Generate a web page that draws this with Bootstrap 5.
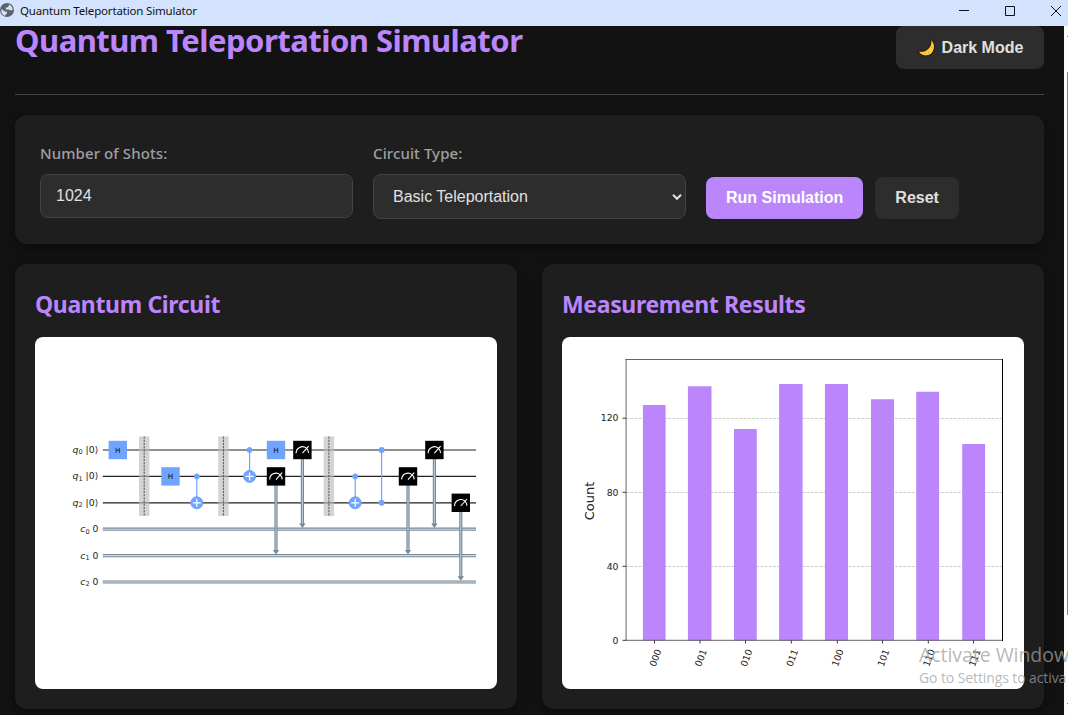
<!DOCTYPE html>
<html lang="en" data-bs-theme="dark">
<head>
<meta charset="utf-8">
<meta name="viewport" content="width=device-width, initial-scale=1">
<title>Quantum Teleportation Simulator</title>
<link href="https://cdn.jsdelivr.net/npm/bootstrap@5.3.0/dist/css/bootstrap.min.css" rel="stylesheet">
<style>
:root { --accent: #bb86fc; --surface: #1e1e1e; --field: #2d2d2d; --line: #444; }
body { background: #121212; color: #e0e0e0; height: 100vh; font-family: "Noto Sans", "Open Sans", sans-serif; }
.titlebar { height: 26px; background: #d3e3fd; color: #111; flex: none; }
.titlebar-text { font-size: 11.5px; line-height: 22px; padding-left: 6px; letter-spacing: -.17px; }
.win-controls { height: 22px; }
.viewport { min-height: 0; }
.page-body { padding: 0 20px 0 15px; min-width: 0; }
.page-header { height: 69px; border-bottom: 1px solid var(--line); margin-bottom: 20px; }
h1, h2 { color: var(--accent); font-weight: 700; margin: 0; white-space: nowrap; }
h1 { font-size: 31px; line-height: 28px; letter-spacing: -.52px; }
h2 { font-size: 23px; line-height: 32px; margin: 4px 0 17px; letter-spacing: -.35px; }
.app-btn { --bs-btn-bg: #2d2d2d; --bs-btn-color: #e0e0e0; --bs-btn-border-width: 0; --bs-btn-border-radius: 8px;
  --bs-btn-font-weight: 700; --bs-btn-font-size: 16px; font-family: "Liberation Sans", sans-serif; height: 42px; padding: 0 20px; line-height: 18px; white-space: nowrap; }
.app-btn-run { --bs-btn-bg: var(--accent); --bs-btn-color: #fff; }
.theme-btn { height: 43px; width: 148px; padding: 0; border-radius: 8px; }
.moon-icon { margin-right: 5px; }
.panel { background: var(--surface); border-radius: 12px; box-shadow: 0 4px 12px rgba(0,0,0,.4); }
.controls { height: 129px; padding: 25px; margin-bottom: 20px; gap: 20px; }
.field-box { width: 313px; }
.field-box label { display: block; font-size: 15px; line-height: 26px; margin-bottom: 8px; color: #a0a0a0; font-weight: 500; letter-spacing: .1px; }
.field-box .form-control, .field-box .form-select { background-color: var(--field); border: 1px solid var(--line); border-radius: 8px; color: #e0e0e0;
  font: 16px/18px "Liberation Sans", sans-serif; height: 44px; padding: 0 15px; }
.field-box .form-select { height: 45px; padding: 0 19px; background-position: right 3px center; background-size: 10px 8px;
  background-image: url("data:image/svg+xml,%3csvg xmlns='http://www.w3.org/2000/svg' viewBox='0 0 10 8'%3e%3cpath fill='none' stroke='%23e0e0e0' stroke-width='2' d='M1 1.8 5 5.8 9 1.8'/%3e%3c/svg%3e"); }
.results { gap: 25px; }
.result-panel { flex: 1 1 0; height: 445px; padding: 20px; }
.figure-box { height: 352px; background: #fff; border-radius: 8px; overflow: hidden; }
.figure-box svg { display: block; width: 100%; height: 100%; font-family: "DejaVu Sans", sans-serif; }
.scroll-track { width: 4px; background: #fcfcfc; padding-left: 3px; flex: none; }
.scroll-arrow { height: 1px; margin-top: 10px; background: #888; }
.scroll-thumb { height: 543px; margin-top: 35px; background: #888; }
.scroll-arrow-end { height: 1px; margin-top: 88px; background: #888; }
.activation { position: absolute; left: 919px; right: 0; top: 642px; overflow: hidden; white-space: nowrap; color: rgba(160,160,160,.75); pointer-events: none; font-family: "Open Sans", sans-serif; }
.activation-title { font-size: 19.5px; line-height: 26px; letter-spacing: -.05px; }
.activation-note { font-size: 14px; line-height: 20px; letter-spacing: -.1px; }
</style>
</head>
<body class="d-flex flex-column overflow-hidden position-relative">
<div class="titlebar d-flex justify-content-between align-items-start">
  <div class="d-flex">
    <svg width="14" height="22" viewBox="0 0 14 22"><circle cx="7" cy="10" r="7" fill="#5f6368"/><path d="M1.2 9.5Q3 9.5 4 10.8T7 11.6Q7.6 13 6 14.4T5.2 16Q1 14.5 1.2 9.5M8.8 4.6Q12.5 6 12.7 10L10.5 10.6Q9.6 9.4 8 9.4H5.8V7.6H7.4Q7.6 6.3 8.8 6.2Z" fill="#d3e3fd"/></svg>
    <span class="titlebar-text">Quantum Teleportation Simulator</span>
  </div>
  <svg class="win-controls" width="118" height="22" viewBox="950 0 118 22" fill="none" stroke="#111"><path d="M959 10.5h10M1005.500 6.500h9v9h-9z"/><path d="M1051 6l10 10M1061 6l-10 10"/></svg>
</div>
<div class="viewport d-flex flex-grow-1">
<main class="page-body flex-grow-1">
  <header class="page-header d-flex justify-content-between align-items-start">
    <h1>Quantum Teleportation Simulator</h1>
    <button class="btn app-btn theme-btn d-flex align-items-center justify-content-center" type="button">
      <svg class="moon-icon" width="20" height="20" viewBox="0 0 20 20"><path d="M13.800 1.200Q18.600 5.400 17.200 11.200Q15.200 17.800 8.600 18Q3 17.600 1.200 12.800Q7 14.400 10.600 11.100Q14.700 7.400 13.800 1.200Z" fill="#ffc83d" stroke="#15120a" stroke-width="1"/><path d="M14.500 9.500l.6.600M11 14.500l.6.500M7.500 15.600l.6.200" stroke="#d67d00"/></svg>
      <span>Dark Mode</span>
    </button>
  </header>
  <section class="panel controls d-flex align-items-start">
    <div class="field-box"><label for="shots">Number of Shots:</label><input id="shots" class="form-control" type="text" value="1024"></div>
    <div class="field-box"><label for="ctype">Circuit Type:</label><select id="ctype" class="form-select"><option>Basic Teleportation</option></select></div>
    <div class="d-flex align-self-end" style="gap:12px">
      <button class="btn app-btn app-btn-run" type="button">Run Simulation</button>
      <button class="btn app-btn" type="button">Reset</button>
    </div>
  </section>
  <section class="results d-flex">
    <article class="panel result-panel">
      <h2>Quantum Circuit</h2>
      <div class="figure-box">
        <svg viewBox="35 337 462 352">
          <defs>
            <g id="hgate"><rect x="-9.200" y="-9.200" width="18.400" height="18.400" fill="#6fa4ff"/><text y="2.700" font-size="7.300" text-anchor="middle" fill="#111">H</text></g>
            <g id="meter"><rect x="-9.200" y="-9.200" width="18.400" height="18.400" fill="#000"/><path d="M-6.300 3.200A6.300 6.300 0 0 1 4 -1.800M0 3.200L6.200-3.800M4.200-1.600Q5.900 0 6.200 3" fill="none" stroke="#fff" stroke-width="1.100"/></g>
            <g id="cnot" stroke="#6fa4ff"><path d="M0-26.400V0" stroke-width="1.200"/><circle cy="-26.400" r="2.500" fill="#6fa4ff"/><circle r="6" fill="#6fa4ff"/><path d="M-4 0H4M0-4V4" stroke="#fff" stroke-width="1.200"/></g>
            <g id="barrier"><rect x="-5.200" y="-13.500" width="10.400" height="79.500" fill="#bdbdbd" opacity=".65"/><path d="M0-13.500V66" stroke="#333" stroke-width=".8" stroke-dasharray="2.200 1"/></g>
          </defs>
          <path d="M102.800 450H476M102.800 476.400H476M102.800 502.800H476" stroke="#222" stroke-width="1.200"/>
          <g fill="none"><path d="M102.800 529.200H476M102.800 555.600H476M102.800 582H476" stroke="#778899" stroke-width="3.200"/><path d="M102.800 529.200H476M102.800 555.600H476M102.800 582H476" stroke="#d2dfea" stroke-width="1.100"/></g>
          <g fill="none"><path d="M276 485V550M302.400 459V524M408 485V550M434.400 459V524M460.800 511V577" stroke="#778899" stroke-width="3.200"/><path d="M276 485V550M302.400 459V524M408 485V550M434.400 459V524M460.800 511V577" stroke="#c3ced8" stroke-width="1"/></g>
          <path d="M272.800 550h6.400l-3.200 4.500zM299.200 523.500h6.400l-3.200 4.500zM404.800 550h6.400l-3.200 4.500zM431.200 523.500h6.400l-3.200 4.500zM457.600 576.300h6.400l-3.200 4.500z" fill="#778899"/>
          <use href="#barrier" x="144.200" y="450"/><use href="#barrier" x="223.400" y="450"/><use href="#barrier" x="328.900" y="450"/>
          <use href="#hgate" x="117.800" y="450"/><use href="#hgate" x="170.500" y="476.400"/><use href="#hgate" x="276" y="450"/>
          <use href="#cnot" x="196.800" y="502.800"/><use href="#cnot" x="249.600" y="476.400"/><use href="#cnot" x="355.200" y="502.800"/>
          <path d="M381.600 450V502.800" stroke="#6fa4ff" stroke-width="1.200"/><g fill="#6fa4ff"><circle cx="381.600" cy="450" r="3"/><circle cx="381.600" cy="502.800" r="3"/></g>
          <use href="#meter" x="302.400" y="450"/><use href="#meter" x="276" y="476.400"/><use href="#meter" x="408" y="476.400"/><use href="#meter" x="434.400" y="450"/><use href="#meter" x="460.800" y="502.800"/>
          <g font-size="9.300" fill="#222">
            <text x="72.500" y="453"><tspan font-style="italic">q</tspan><tspan font-size="6.500" dy="1.400">0</tspan><tspan x="85.600" dy="-1.400">|0⟩</tspan></text>
            <text x="72.500" y="479.400"><tspan font-style="italic">q</tspan><tspan font-size="6.500" dy="1.400">1</tspan><tspan x="85.600" dy="-1.400">|0⟩</tspan></text>
            <text x="72.500" y="505.800"><tspan font-style="italic">q</tspan><tspan font-size="6.500" dy="1.400">2</tspan><tspan x="85.600" dy="-1.400">|0⟩</tspan></text>
            <text x="80.300" y="532.200"><tspan font-style="italic">c</tspan><tspan font-size="6.500" dy="1.400">0</tspan><tspan x="92.500" dy="-1.400">0</tspan></text>
            <text x="80.300" y="558.600"><tspan font-style="italic">c</tspan><tspan font-size="6.500" dy="1.400">1</tspan><tspan x="92.500" dy="-1.400">0</tspan></text>
            <text x="80.300" y="585"><tspan font-style="italic">c</tspan><tspan font-size="6.500" dy="1.400">2</tspan><tspan x="92.500" dy="-1.400">0</tspan></text>
          </g>
        </svg>
      </div>
    </article>
    <article class="panel result-panel">
      <h2>Measurement Results</h2>
      <div class="figure-box">
        <svg viewBox="562 337 462 352">
          <path d="M626 566.500H1002M626 492.500H1002M626 418.500H1002" stroke="#c8c8c8" stroke-width=".9" stroke-dasharray="3 1.200"/>
          <path fill="#bb86fc" d="M642.900 640.500V404.900h22.700v235.600zM687.900 640.500V386.200h23.600v254.300zM734 640.500V429h22.800v211.500zM779.100 640.500V384.100h23.500v256.400zM824.900 640.500V384.100h23.100v256.400zM871 640.500V399.200h23v241.300zM916.200 640.500V391.800h22.900v248.700zM962.200 640.500V444h22.900v196.500z"/>
          <path d="M626.100 359V640.500M625.500 359.500H1003M625.500 640.300H1003" fill="none" stroke="#555" stroke-width=".9"/>
          <path d="M1002.500 359V641" stroke="#000"/>
          <path d="M622.500 418.200h3.500M622.500 492.300h3.500M622.500 566.300h3.500M622.500 640.300h3.500M654.500 640.500v3M700 640.500v3M745.500 640.500v3M791.300 640.500v3M837.300 640.500v3M882.500 640.500v3M928.300 640.500v3M973.500 640.500v3" stroke="#222" stroke-width=".9"/>
          <g font-size="9.300" fill="#222" text-anchor="end"><text x="618.500" y="421.400">120</text><text x="618.500" y="495.500">80</text><text x="618.500" y="569.600">40</text><text x="618.500" y="643.600">0</text></g>
          <text transform="translate(594.300 501) rotate(-90)" text-anchor="middle" font-size="13" fill="#222">Count</text>
          <g font-size="9.300" fill="#222" text-anchor="middle">
            <text transform="translate(658.500 659) rotate(-70)">000</text><text transform="translate(703.900 659) rotate(-70)">001</text>
            <text transform="translate(749.600 659) rotate(-70)">010</text><text transform="translate(795.200 659) rotate(-70)">011</text>
            <text transform="translate(840.800 659) rotate(-70)">100</text><text transform="translate(886.500 659) rotate(-70)">101</text>
            <text transform="translate(932.100 659) rotate(-70)">110</text><text transform="translate(977.800 659) rotate(-70)">111</text>
          </g>
        </svg>
      </div>
    </article>
  </section>
</main>
<div class="scroll-track"><div class="scroll-arrow"></div><div class="scroll-thumb"></div><div class="scroll-arrow-end"></div></div>
</div>
<div class="activation"><div class="activation-title">Activate Window</div><div class="activation-note">Go to Settings to activa</div></div>
<script src="https://cdn.jsdelivr.net/npm/bootstrap@5.3.0/dist/js/bootstrap.bundle.min.js"></script>
</body>
</html>
